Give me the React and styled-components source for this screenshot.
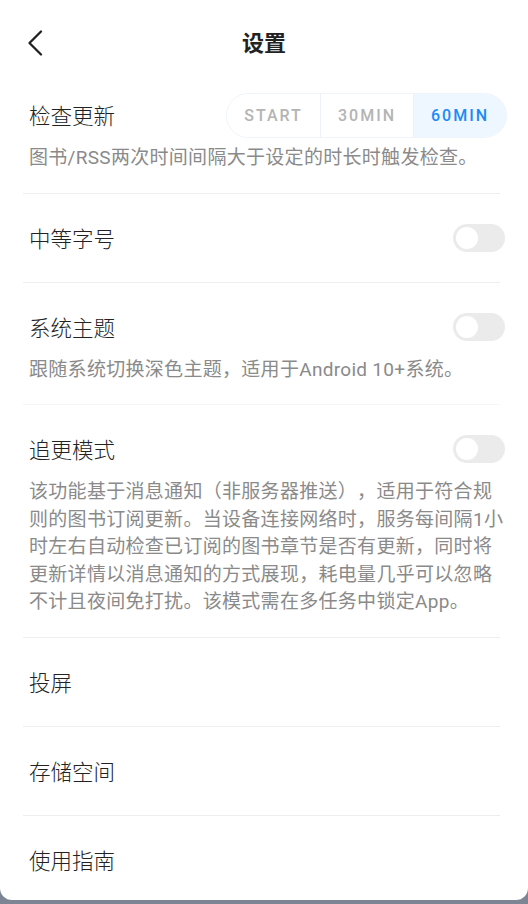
import { useState } from 'react';
import styled, { createGlobalStyle } from 'styled-components';

const GlobalStyle = createGlobalStyle`
  html, body {
    margin: 0;
    padding: 0;
    background: #7d8594;
  }
  body {
    font-family: Roboto, "Noto Sans CJK SC", sans-serif;
    -webkit-font-smoothing: antialiased;
    text-spacing-trim: space-all;
  }
`;

const intervals = ['START', '30MIN', '60MIN'];

const App = () => {
  const [interval, setInterval] = useState('60MIN');
  const [toggles, setToggles] = useState({ font: false, theme: false, follow: false });

  const flip = (key) => setToggles((t) => ({ ...t, [key]: !t[key] }));

  return (
    <>
      <GlobalStyle />
      <Sheet>
        {/* Header */}
        <Header>
          <BackButton aria-label='返回'>
            <svg width='16' height='26' viewBox='0 0 16 26' fill='none'>
              <polyline
                points='14,1.5 2.5,13 14,24.5'
                stroke='#222'
                strokeWidth='2.3'
                strokeLinecap='round'
                strokeLinejoin='round'
              />
            </svg>
          </BackButton>
          <Title>设置</Title>
          <span />
        </Header>

        <List>
          {/* Check interval */}
          <Row $note>
            <Head>
              <Label>检查更新</Label>
              <Segments>
                {intervals.map((item) => (
                  <Segment key={item} $active={item === interval} onClick={() => setInterval(item)}>
                    {item}
                  </Segment>
                ))}
              </Segments>
            </Head>
            <Desc>图书/RSS两次时间间隔大于设定的时长时触发检查。</Desc>
          </Row>

          <Row>
            <Head>
              <Label>中等字号</Label>
              <Toggle $on={toggles.font} onClick={() => flip('font')} />
            </Head>
          </Row>

          <Row $note $faint>
            <Head>
              <Label>系统主题</Label>
              <Toggle $on={toggles.theme} onClick={() => flip('theme')} />
            </Head>
            <Desc>跟随系统切换深色主题，适用于Android 10+系统。</Desc>
          </Row>

          <Row $note>
            <Head>
              <Label>追更模式</Label>
              <Toggle $on={toggles.follow} onClick={() => flip('follow')} />
            </Head>
            <Desc>
              该功能基于消息通知（非服务器推送），适用于符合规则的图书订阅更新。当设备连接网络时，服务每间隔1小时左右自动检查已订阅的图书章节是否有更新，同时将更新详情以消息通知的方式展现，耗电量几乎可以忽略不计且夜间免打扰。该模式需在多任务中锁定App。
            </Desc>
          </Row>

          <Row>
            <Head>
              <Label>投屏</Label>
            </Head>
          </Row>

          <Row>
            <Head>
              <Label>存储空间</Label>
            </Head>
          </Row>

          <Row $last>
            <Head>
              <Label>使用指南</Label>
            </Head>
          </Row>
        </List>
      </Sheet>
    </>
  );
};
export default App;

const Sheet = styled.div`
  height: 900px;
  overflow: hidden;
  background: #fff;
  border-radius: 0 0 12px 12px;
  padding: 0 23px;
  box-sizing: border-box;
`;

const Header = styled.header`
  display: grid;
  grid-template-columns: 40px 1fr 40px;
  align-items: center;
  height: 28px;
  padding: 27px 0 16px;
`;

const BackButton = styled.button`
  display: flex;
  align-items: center;
  width: 40px;
  height: 28px;
  padding: 0 0 0 4px;
  border: none;
  background: none;
  cursor: pointer;
`;

const Title = styled.h1`
  margin: 0;
  padding-bottom: 4px;
  text-align: center;
  font-family: "Noto Sans CJK SC", sans-serif;
  font-size: 22px;
  line-height: 28px;
  font-weight: 700;
  color: #222;
`;

const List = styled.div`
  display: flex;
  flex-direction: column;
`;

const Row = styled.div`
  padding: 30px 0 ${(p) => (p.$last ? '30px' : p.$note ? '22px' : '31px')} 6px;
  background: ${(p) =>
    p.$last
      ? 'none'
      : `linear-gradient(${p.$faint ? '#f6f6f6' : '#eeeeee'}, ${p.$faint ? '#f6f6f6' : '#eeeeee'}) left bottom / calc(100% - 5px) 1px no-repeat`};
`;

const Head = styled.div`
  display: flex;
  align-items: center;
  justify-content: space-between;
  height: 28px;
`;

const Label = styled.span`
  font-family: "Noto Sans CJK SC", sans-serif;
  font-size: 21.5px;
  font-weight: 300;
  line-height: 28px;
  color: #222;
`;

const Desc = styled.p`
  margin: 15px 0 0;
  font-family: Roboto, "Noto Sans CJK SC", sans-serif;
  font-size: 19px;
  line-height: 27.5px;
  letter-spacing: 0.3px;
  color: #8a8a8a;
`;

const Segments = styled.div`
  display: flex;
  height: 45px;
  margin-right: -2px;
  border: 1px solid #edf4fc;
  border-radius: 23px;
  overflow: hidden;
  box-sizing: border-box;
`;

const Segment = styled.button`
  width: 93px;
  border: none;
  border-left: 1px solid #edf2f8;
  background: ${(p) => (p.$active ? '#eef6ff' : '#fff')};
  color: ${(p) => (p.$active ? '#1c8af7' : '#b4b4b4')};
  font-family: Roboto, sans-serif;
  font-size: 16px;
  font-weight: 500;
  letter-spacing: 2px;
  cursor: pointer;

  &:first-child {
    border-left: none;
  }
`;

const Toggle = styled.button`
  position: relative;
  width: 52px;
  height: 28px;
  padding: 0;
  border: none;
  border-radius: 14px;
  background: ${(p) => (p.$on ? '#1c8af7' : '#ebebeb')};
  cursor: pointer;

  &::after {
    content: '';
    position: absolute;
    top: 3px;
    left: ${(p) => (p.$on ? '27px' : '3px')};
    width: 22px;
    height: 22px;
    border-radius: 50%;
    background: #fff;
    transition: left 0.2s;
  }
`;
